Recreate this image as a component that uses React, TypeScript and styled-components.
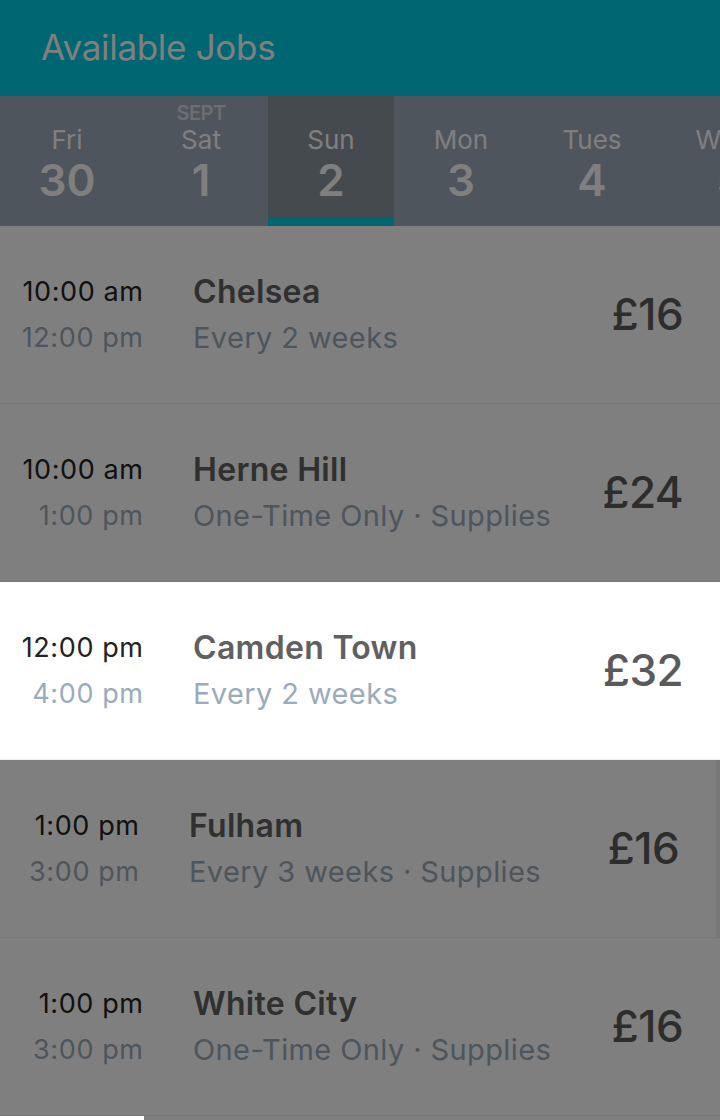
import React from 'react'
import styled, { createGlobalStyle, css } from 'styled-components'

type Day = { month?: string; name: string; num: string; width: number; active?: boolean }

type Job = {
  start: string
  end: string
  area: string
  detail: string
  price: string
  focus?: boolean
  nudged?: boolean
}

const days: Day[] = [
  { name: 'Fri', num: '30', width: 134 },
  { month: 'SEPT', name: 'Sat', num: '1', width: 134 },
  { name: 'Sun', num: '2', width: 126, active: true },
  { name: 'Mon', num: '3', width: 134 },
  { name: 'Tues', num: '4', width: 128 },
  { name: 'Weds', num: '5', width: 148 },
]

const jobs: Job[] = [
  { start: '10:00 am', end: '12:00 pm', area: 'Chelsea', detail: 'Every 2 weeks', price: '£16' },
  { start: '10:00 am', end: '1:00 pm', area: 'Herne Hill', detail: 'One-Time Only · Supplies', price: '£24' },
  { start: '12:00 pm', end: '4:00 pm', area: 'Camden Town', detail: 'Every 2 weeks', price: '£32', focus: true },
  { start: '1:00 pm', end: '3:00 pm', area: 'Fulham', detail: 'Every 3 weeks · Supplies', price: '£16', nudged: true },
  { start: '1:00 pm', end: '3:00 pm', area: 'White City', detail: 'One-Time Only · Supplies', price: '£16' },
]

const App = () => (
  <>
    <GlobalStyle />
    <Screen>
      <Header>
        <Title>Available Jobs</Title>
      </Header>
      <DateStrip>
        {days.map((d) => (
          <DayCell key={d.name} active={d.active} style={{ width: d.width }}>
            <Month>{d.month}</Month>
            <DayName>{d.name}</DayName>
            <DayNum>{d.num}</DayNum>
          </DayCell>
        ))}
      </DateStrip>
      <List>
        {jobs.map((job) => (
          <Row key={job.area} focus={job.focus} nudged={job.nudged}>
            <Times>
              <Start>{job.start}</Start>
              <End>{job.end}</End>
            </Times>
            <Info>
              <Area>{job.area}</Area>
              <Detail>{job.detail}</Detail>
            </Info>
            <Price>{job.price}</Price>
          </Row>
        ))}
        <NextRow>
          <Progress />
        </NextRow>
      </List>
      <Dim />
    </Screen>
  </>
)

export default App

const GlobalStyle = createGlobalStyle`
  html, body {
    margin: 0;
    padding: 0;
    background: #fff;
    overflow: hidden;
  }
  * {
    box-sizing: border-box;
  }
`

const Screen = styled.div`
  position: relative;
  width: 720px;
  height: 1120px;
  overflow: hidden;
  font-family: Inter, Lato, sans-serif;
`

const Header = styled.header`
  display: flex;
  align-items: center;
  height: 96px;
  padding: 0 41px 2px;
  background: #00cce4;
`

const Title = styled.h1`
  margin: 0;
  font-size: 35px;
  font-weight: 400;
  color: #fff;
  letter-spacing: -0.3px;
`

const DateStrip = styled.nav`
  display: flex;
  height: 130px;
  background: #9eaab8;
  overflow: hidden;
`

const DayCell = styled.div<{ active?: boolean }>`
  flex: none;
  display: flex;
  flex-direction: column;
  align-items: center;
  padding-top: 6px;
  color: #fff;
  ${({ active }) =>
    active &&
    css`
      background: #8a949e;
      box-shadow: inset 0 -8px 0 #00cce4;
    `}
`

const Month = styled.div`
  height: 22px;
  font-size: 20px;
  font-weight: 600;
  color: #d8dde3;
  line-height: 22px;
  letter-spacing: -0.5px;
`

const DayName = styled.div`
  font-size: 26px;
  line-height: 32px;
`

const DayNum = styled.div`
  font-size: 44px;
  font-weight: 600;
  line-height: 50px;
  margin-top: -1px;
`

const List = styled.div`
  display: flex;
  flex-direction: column;
`

const Row = styled.div<{ focus?: boolean; nudged?: boolean }>`
  display: flex;
  align-items: center;
  height: 178px;
  padding: 0 37px 0 20px;
  background: #fff;
  border-bottom: 1px solid #eeeeee;
  ${({ focus }) =>
    focus &&
    css`
      position: relative;
      z-index: 2;
    `}
  ${({ nudged }) =>
    nudged &&
    css`
      padding: 0 41px 0 16px;
      box-shadow: inset -4px 0 0 #f0f0f0;
    `}
`

const Times = styled.div`
  width: 123px;
  display: flex;
  flex-direction: column;
  align-items: flex-end;
  gap: 10px;
`

const Start = styled.div`
  font-size: 27px;
  line-height: 36px;
  color: #222;
  letter-spacing: 0.6px;
  margin-right: -0.6px;
`

const End = styled.div`
  font-size: 27px;
  line-height: 36px;
  color: #9aabbb;
  letter-spacing: 0.6px;
  margin-right: -0.6px;
`

const Info = styled.div`
  flex: 1;
  display: flex;
  flex-direction: column;
  gap: 10px;
  margin-left: 50px;
`

const Area = styled.div`
  font-size: 32px;
  font-weight: 600;
  line-height: 36px;
  color: #606060;
  letter-spacing: 0.3px;
`

const Detail = styled.div`
  font-size: 29px;
  line-height: 36px;
  color: #9aabbb;
  letter-spacing: 0.4px;
`

const Price = styled.div`
  font-size: 44px;
  font-weight: 500;
  color: #5a5a5a;
  margin-bottom: 2px;
  letter-spacing: -0.6px;
`

const NextRow = styled.div`
  height: 80px;
  background: #fff;
`

const Progress = styled.div`
  position: relative;
  z-index: 2;
  width: 144px;
  height: 4px;
  background: #fff;
`

const Dim = styled.div`
  position: absolute;
  inset: 0;
  z-index: 1;
  background: rgba(0, 0, 0, 0.5);
`
